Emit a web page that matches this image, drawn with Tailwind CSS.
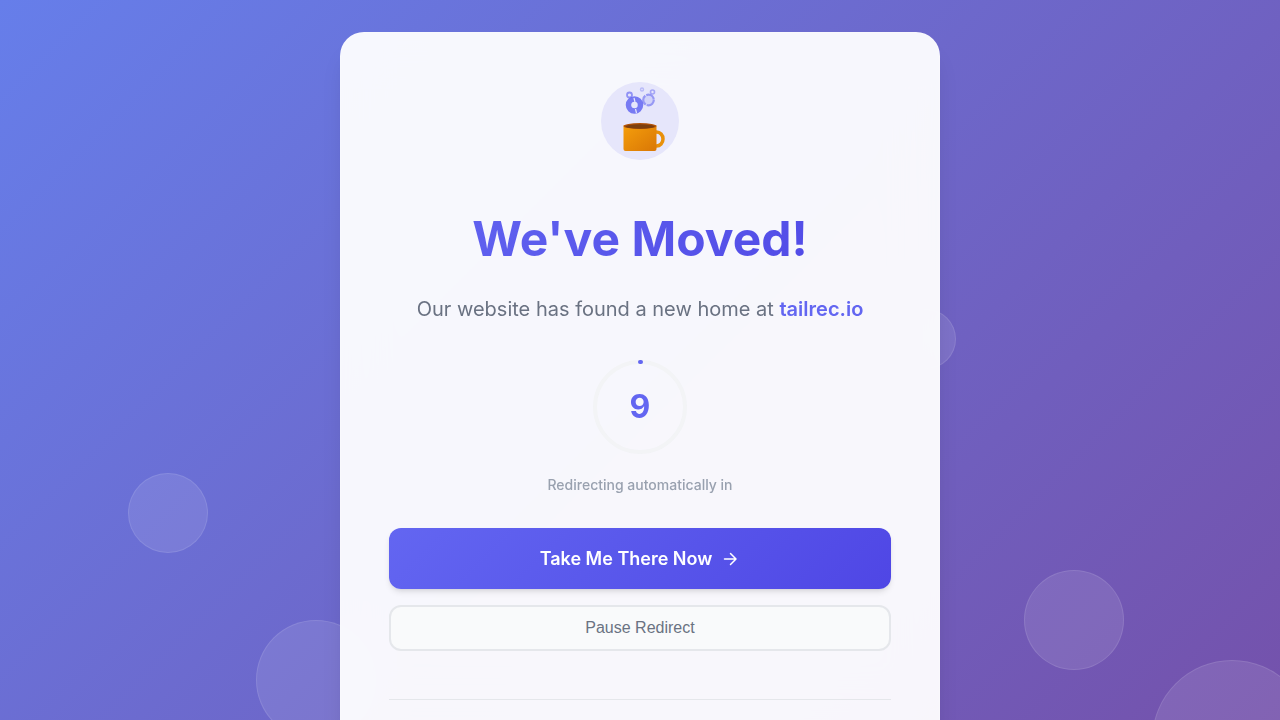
<!DOCTYPE html>
<html lang="en">

<head>
  <meta charset="UTF-8">
  <meta name="viewport" content="width=device-width, initial-scale=1.0">
  <title>We've Moved!</title>

  <!-- Include Tailwind CSS CDN -->
  <script src="https://cdn.jsdelivr.net/npm/@tailwindcss/browser@4"></script>
</head>

<body class="font-[Inter,sans-serif]">
  <div class="relative h-screen overflow-hidden bg-[linear-gradient(135deg,#667eea_0%,#764ba2_100%)] bg-[length:100%_140%] px-4 pt-8">

    <!-- Floating bubbles -->
    <div class="absolute left-[10%] top-[473px] size-20 rounded-full border border-white/10 bg-white/10"></div>
    <div class="absolute left-[20%] top-[620px] size-[120px] rounded-full border border-white/10 bg-white/10"></div>
    <div class="absolute left-[70%] top-[309px] size-[60px] rounded-full border border-white/10 bg-white/10"></div>
    <div class="absolute left-[80%] top-[570px] size-[100px] rounded-full border border-white/10 bg-white/10"></div>
    <div class="absolute left-[90%] top-[660px] size-40 rounded-full border border-white/10 bg-white/10"></div>

    <!-- Card -->
    <main class="relative mx-auto min-h-full max-w-[600px] rounded-3xl border border-white/20 bg-white/95 p-12 text-center shadow-xl backdrop-blur-xl">
      <svg class="mx-auto size-20" viewBox="0 0 80 80" fill="none" aria-hidden="true">
        <defs>
          <linearGradient id="cup" x1="0" y1="0" x2="1" y2="1">
            <stop offset="0" stop-color="#f59e0b" />
            <stop offset="1" stop-color="#d97706" />
          </linearGradient>
        </defs>
        <circle cx="40" cy="40" r="39" fill="#e6e6fb" />
        <!-- bubbles -->
        <g stroke="#6366f1">
          <circle cx="34.5" cy="24" r="6" stroke-width="5.500" opacity=".85" />
          <path d="M34 17l1 4M35.500 28l1 4M31.500 24h1" stroke="#e6e6fb" stroke-width="1.2" />
          <circle cx="48.500" cy="19" r="5.300" fill="#6366f1" fill-opacity=".25" stroke-width="2.200" stroke-dasharray="10 1" opacity=".6" />
          <circle cx="29.500" cy="14" r="2.500" stroke-width="1.800" opacity=".65" />
          <circle cx="52.500" cy="11" r="2" stroke-width="1.600" opacity=".5" />
          <circle cx="42" cy="8.500" r="1.500" stroke-width="1.400" opacity=".35" />
        </g>
        <!-- cup -->
        <path d="M55.500 51h1a6.500 7 0 0 1 0 14h-1" stroke="#e8900a" stroke-width="3.500" />
        <path d="M23.500 44.500h33V68a2 2 0 0 1-2 2H25.500a2 2 0 0 1-2-2z" fill="url(#cup)" />
        <ellipse cx="40" cy="45" rx="16.500" ry="3" fill="#b45309" />
        <ellipse cx="40" cy="45.500" rx="14.500" ry="2.200" fill="#7c3f10" />
      </svg>

      <h1 class="mt-12 bg-linear-135 from-[#6366f1] to-[#4f46e5] bg-clip-text text-5xl leading-[60px] font-bold text-transparent">We've Moved!</h1>
      <p class="mt-6 text-xl leading-8 text-gray-500">Our website has found a new home at <a href="https://tailrec.io" class="font-semibold text-[#6366f1]">tailrec.io</a></p>

      <div class="relative mx-auto mt-8 size-[100px]">
        <svg class="size-full" viewBox="0 0 100 100" fill="none" aria-hidden="true">
          <circle cx="50" cy="50" r="45" stroke="#f3f4f6" stroke-width="4" />
          <path d="M50 5h1" stroke="#6366f1" stroke-width="4" stroke-linecap="round" />
        </svg>
        <span class="absolute inset-0 flex items-center justify-center text-[32px] font-bold text-[#6366f1]">9</span>
      </div>
      <p class="mt-4 text-sm leading-[23px] font-medium text-gray-400">Redirecting automatically in</p>

      <div class="mt-8 flex flex-col gap-4">
        <a href="https://tailrec.io" class="flex h-[61px] items-center justify-center gap-2 rounded-xl bg-linear-135 from-[#6366f1] to-[#4f46e5] text-lg font-semibold text-white shadow-md">
          Take Me There Now
          <svg class="size-5" viewBox="0 0 20 20" fill="none" stroke="currentColor" stroke-width="1.5" stroke-linecap="round" stroke-linejoin="round" aria-hidden="true">
            <path d="M4.500 10h11M10.500 4.500 16 10l-5.500 5.500" />
          </svg>
        </a>
        <button type="button" class="h-[46px] rounded-xl border-2 border-gray-200 bg-gray-50 font-['Liberation_Sans',Arial,sans-serif] text-base text-gray-500">Pause Redirect</button>
      </div>

      <hr class="mt-12 border-gray-200">
    </main>
  </div>
</body>

</html>
